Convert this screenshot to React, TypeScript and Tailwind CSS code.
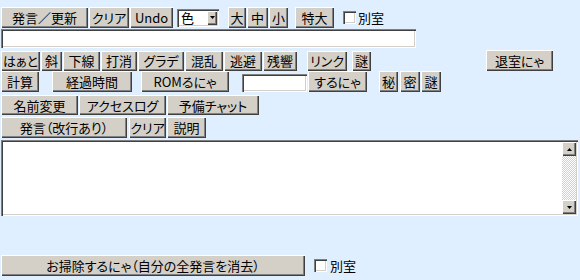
import React from 'react';

const font = "font-['Noto_Sans_CJK_JP','Noto_Sans',sans-serif] [font-feature-settings:'palt'] text-[13px] leading-none";
const bevel = 'flex shrink-0 items-center justify-center whitespace-nowrap bg-[#d4d0c8] text-black shadow-[inset_1px_1px_0_#ffffff,inset_-1px_-1px_0_#404040,inset_-2px_-2px_0_#808080]';
const sunken = 'bg-white shadow-[inset_1px_1px_0_#808080,inset_2px_2px_0_#404040,inset_-1px_-1px_0_#ffffff,inset_-2px_-2px_0_#d4d0c8]';

function Btn({ label, className }: { label: string; className: string }) {
    return <div className={`${bevel} ${className}`}>{label}</div>;
}

function Check({ className }: { className: string }) {
    return <div className={`${sunken} h-[13px] w-[13px] shrink-0 ${className}`} />;
}

function Arrow({ up }: { up?: boolean }) {
    return (
        <svg width="5" height="3" viewBox="0 0 5 3">
            <path d={up ? 'M2.5 0L5 3H0z' : 'M0 0h5L2.5 3z'} fill="#000" />
        </svg>
    );
}

export default function App() {
    return (
        <div className={`w-[580px] h-[280px] overflow-hidden bg-[#e0efff] ${font}`}>
            {/* row 1 */}
            <div className="flex items-center pt-[7px] pl-[1px]">
                <Btn label="発言／更新" className="h-[21px] w-[87px]" />
                <Btn label="クリア" className="ml-[1px] h-[21px] w-[40px]" />
                <Btn label="Undo" className="ml-[1px] h-[21px] w-[43px]" />
                <div className={`${sunken} ml-[4px] flex h-[18px] w-[42px] items-center justify-between pl-[4px] pr-[2px]`}>
                    <span>色</span>
                    <div className={`${bevel} h-[14px] w-[10px]`}>
                        <Arrow />
                    </div>
                </div>
                <Btn label="大" className="ml-[9px] h-[21px] w-[18px]" />
                <Btn label="中" className="ml-[1px] h-[21px] w-[21px]" />
                <Btn label="小" className="ml-[1px] h-[21px] w-[19px]" />
                <Btn label="特大" className="ml-[7px] h-[21px] w-[39px]" />
                <Check className="ml-[9px]" />
                <span className="ml-[2px]">別室</span>
            </div>

            {/* text input */}
            <div className={`${sunken} ml-[1px] mt-[1px] h-[19px] w-[415px]`} />

            {/* row 3 */}
            <div className="mt-[2px] flex items-center pl-[1px]">
                <Btn label="はぁと" className="h-[20px] w-[39px]" />
                <Btn label="斜" className="ml-[1px] h-[20px] w-[21px]" />
                <Btn label="下線" className="ml-[1px] h-[20px] w-[37px]" />
                <Btn label="打消" className="ml-[1px] h-[20px] w-[36px]" />
                <Btn label="グラデ" className="ml-[1px] h-[20px] w-[46px]" />
                <Btn label="混乱" className="ml-[1px] h-[20px] w-[38px]" />
                <Btn label="逃避" className="ml-[1px] h-[20px] w-[38px]" />
                <Btn label="残響" className="ml-[1px] h-[20px] w-[34px]" />
                <Btn label="リンク" className="ml-[10px] h-[20px] w-[40px]" />
                <Btn label="謎" className="ml-[5px] h-[20px] w-[19px]" />
                <Btn label="退室にゃ" className="ml-[115px] h-[21px] w-[67px]" />
            </div>

            {/* row 4 */}
            <div className="flex items-end pl-[1px]">
                <Btn label="計算" className="h-[21px] w-[38px]" />
                <Btn label="経過時間" className="ml-[13px] h-[21px] w-[80px]" />
                <Btn label="ROMるにゃ" className="ml-[9px] h-[21px] w-[88px]" />
                <div className={`${sunken} ml-[13px] h-[18px] w-[65px]`} />
                <Btn label="するにゃ" className="ml-[1px] h-[21px] w-[59px]" />
                <Btn label="秘" className="ml-[12px] h-[21px] w-[19px]" />
                <Btn label="密" className="ml-[2px] h-[21px] w-[20px]" />
                <Btn label="謎" className="ml-[1px] h-[21px] w-[20px]" />
            </div>

            {/* row 5 */}
            <div className="mt-[3px] flex items-center pl-[1px]">
                <Btn label="名前変更" className="h-[20px] w-[77px]" />
                <Btn label="アクセスログ" className="ml-[1px] h-[20px] w-[87px]" />
                <Btn label="予備チャット" className="ml-[1px] h-[20px] w-[92px]" />
            </div>

            {/* row 6 */}
            <div className="mt-[2px] flex items-center pl-[1px]">
                <Btn label="発言（改行あり）" className="h-[21px] w-[126px]" />
                <Btn label="クリア" className="ml-[2px] h-[21px] w-[37px]" />
                <Btn label="説明" className="ml-[1px] h-[21px] w-[39px]" />
            </div>

            {/* textarea */}
            <div className={`${sunken} ml-[1px] mt-[2px] flex h-[76px] w-[577px] justify-end p-[2px]`}>
                <div className="flex w-[14px] flex-col">
                    <div className={`${bevel} h-[14px] w-[14px]`}>
                        <Arrow up />
                    </div>
                    <div className="flex-1 bg-[repeating-conic-gradient(#d4d0c8_0_25%,#ffffff_0_50%)] bg-[length:2px_2px]" />
                    <div className={`${bevel} h-[14px] w-[14px]`}>
                        <Arrow />
                    </div>
                </div>
            </div>

            {/* bottom */}
            <div className="mt-[39px] flex items-center pl-[1px]">
                <Btn label="お掃除するにゃ（自分の全発言を消去）" className="h-[21px] w-[304px]" />
                <Check className="ml-[9px]" />
                <span className="ml-[3px]">別室</span>
            </div>
        </div>
    );
}
